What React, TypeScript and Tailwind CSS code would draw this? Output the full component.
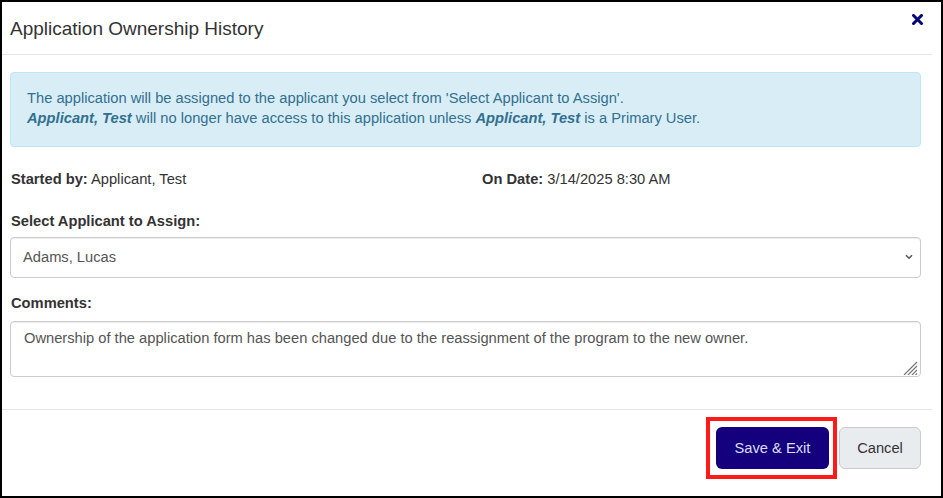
import React from 'react';

const App: React.FC = () => {
  return (
    <div className="w-[943px] h-[498px] border-2 border-black bg-white text-[#333] text-[14.7px] font-['Liberation_Sans',Arial,sans-serif] overflow-hidden">
      <div className="w-[930px] h-full flex flex-col">
        {/* Header */}
        <div className="h-[53px] border-b border-[#e5e5e5] flex items-center justify-between pl-2 pr-[9px]">
          <h4 className="text-[19px] leading-[20px] text-[#333] pt-[1px]">Application Ownership History</h4>
          <button className="self-start mt-[12px] text-[#000080]" aria-label="Close">
            <svg width="11" height="11" viewBox="0 0 11 11">
              <path d="M1.5 1.5 L9.5 9.5 M9.5 1.5 L1.5 9.5" stroke="#000080" strokeWidth="3" strokeLinecap="square" />
            </svg>
          </button>
        </div>

        {/* Body */}
        <div className="pl-2 pr-[11px] pt-[17px]">
          <div className="border border-[#bce8f1] bg-[#d9edf7] text-[#31708f] rounded-[4px] pl-[16px] pr-4 pt-[15px] pb-[18px] leading-[20px]">
            <p>The application will be assigned to the applicant you select from 'Select Applicant to Assign'.</p>
            <p>
              <b><i>Applicant, Test</i></b> will no longer have access to this application unless <b><i>Applicant, Test</i></b> is a Primary User.
            </p>
          </div>

          <div className="grid grid-cols-[471px_1fr] mt-[22px] leading-[20px] pl-[1px]">
            <div><span className="font-bold">Started by:</span> Applicant, Test</div>
            <div><span className="font-bold">On Date:</span> 3/14/2025 8:30 AM</div>
          </div>

          <label className="block font-bold leading-[20px] mt-[22px] pl-[1px]">Select Applicant to Assign:</label>
          <div className="relative mt-[6px]">
            <select
              defaultValue="adams"
              className="w-full h-[41px] appearance-none border border-[#ccc] rounded-[4px] bg-white pl-[12px] pr-8 text-[14.7px] text-[#555] shadow-[inset_0_1px_1px_rgba(0,0,0,0.075)]"
            >
              <option value="adams">Adams, Lucas</option>
            </select>
            <svg className="absolute right-[8px] top-[17px] pointer-events-none" width="8" height="6" viewBox="0 0 8 6">
              <path d="M1 1.2 L4 4.2 L7 1.2" stroke="#555" strokeWidth="1.6" fill="none" />
            </svg>
          </div>

          <label className="block font-bold leading-[20px] mt-[15px] pl-[1px]">Comments:</label>
          <div className="relative mt-[8px]">
            <textarea
              readOnly
              defaultValue="Ownership of the application form has been changed due to the reassignment of the program to the new owner."
              className="block w-full h-[56px] resize-none border border-[#ccc] rounded-[4px] px-[13px] pt-[6px] text-[14.7px] leading-[20px] text-[#555] shadow-[inset_0_1px_1px_rgba(0,0,0,0.075)] outline-none"
            />
            <svg className="absolute right-[3px] bottom-[2px] pointer-events-none" width="15" height="14" viewBox="0 0 15 14">
              <path d="M14 1 L1 14 M14 5 L5 14 M14 9 L9 14 M14 12.5 L12.5 14" stroke="#777" strokeWidth="1.2" />
            </svg>
          </div>
        </div>

        {/* Footer */}
        <div className="mt-[32px] border-t border-[#e5e5e5] pt-[7px] pr-[11px] flex justify-end items-center gap-[2px]">
          <div className="border-[4px] border-[#ff1a1a] pl-[6px] pr-[4px] py-[6px]">
            <button className="h-[42px] w-[113px] rounded-[6px] bg-[#14007d] text-[#dcdcf2] text-[14.7px]">Save &amp; Exit</button>
          </div>
          <button className="h-[42px] w-[82px] rounded-[6px] bg-[#e9ecef] border border-[#ccc] text-[#333] text-[14.7px]">Cancel</button>
        </div>
      </div>
    </div>
  );
};

export default App;
